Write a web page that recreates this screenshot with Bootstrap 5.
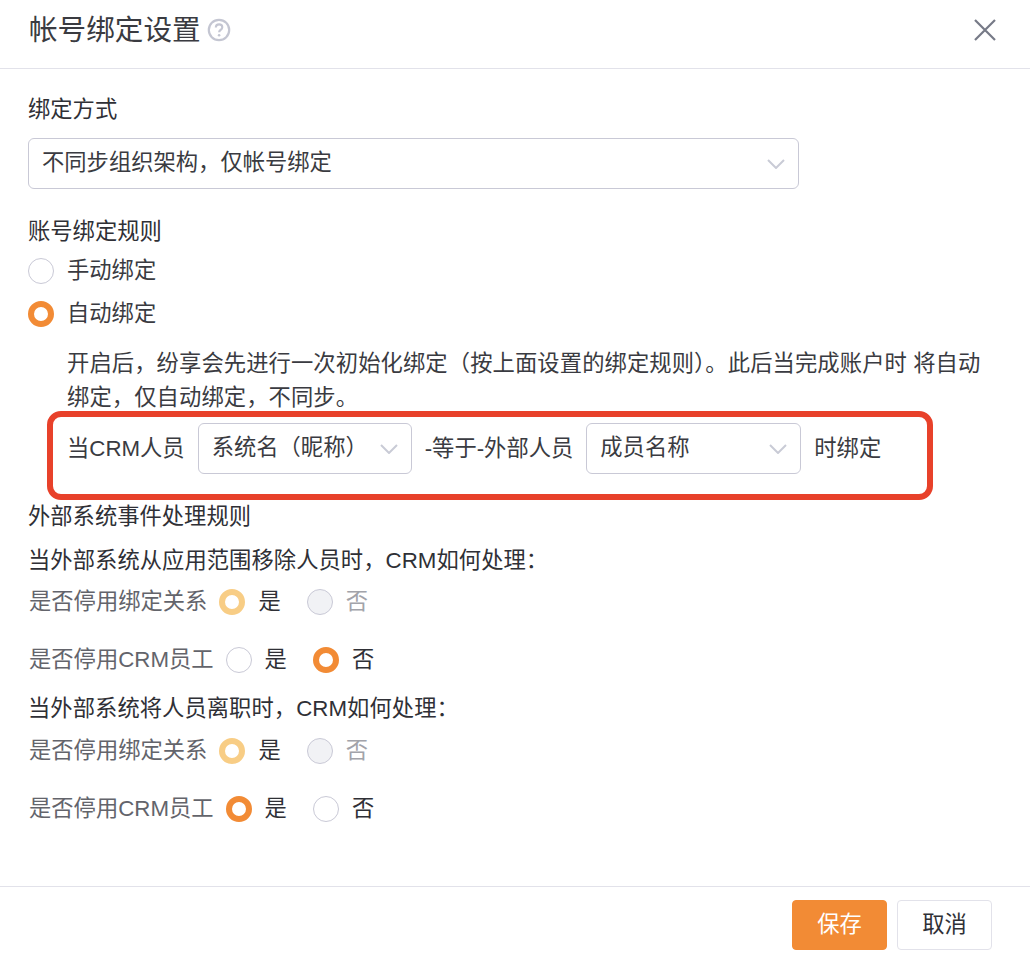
<!DOCTYPE html>
<html lang="zh-CN">
<head>
<meta charset="utf-8">
<title>帐号绑定设置</title>
<link href="https://cdn.jsdelivr.net/npm/bootstrap@5.3.0/dist/css/bootstrap.min.css" rel="stylesheet">
<style>
html,body{height:960px;overflow:hidden;background:#fff}
body{font-family:"Liberation Sans","Noto Sans CJK SC",sans-serif;font-size:22.3px;color:#2f3036;line-height:34px}
.shell{position:relative;height:960px;display:flex;flex-direction:column}
.head-bar{height:69px;padding:0 28px 8px 29px;border-bottom:1px solid #e2e2ea;flex:none}
.head-title{font-size:28.6px;line-height:60px;color:#3a3b41;margin:0;font-weight:400}
.help-ico{width:24px;height:24px;margin-left:6px;flex:none}
.close-ico{width:22px;height:22px;margin-right:6px}
.main-area{flex:1;padding:24px 28px 0 28px}
.sec-label{line-height:34px}
.sec-rule{margin-top:26px}
.pick{height:51px;border:1px solid #c9c9d6;border-radius:6px;font-size:22.3px;line-height:1.2;color:#3a3b41;padding:0 40px 0 13px;background-color:#fff;background-position:right 13px center;background-size:18px 10px;background-image:url("data:image/svg+xml,%3csvg xmlns='http://www.w3.org/2000/svg' viewBox='0 0 18 10'%3e%3cpath fill='none' stroke='%23c9cbd6' stroke-width='2' d='M1 1l8 8 8-8'/%3e%3c/svg%3e")}
.pick-wide{width:771px;margin-top:11px}
.pick-a{width:214px}
.pick-b{width:215px}
.rad{width:26px;height:26px;margin:0;flex:none;border:1px solid #c9c9d6;background-image:none!important;background-color:#fff}
.rad:checked{background-color:#fff;border:6.5px solid #f28b35}
.rad:disabled{opacity:1}
.rad:disabled:not(:checked){background-color:#f1f2f5}
.rad:checked:disabled{border-color:#f8cd85}
.opt-row{height:43px;gap:13px}
.opt-row label{color:#3a3b41}
.desc-txt{margin:12px 20px 0 39px;line-height:34px;color:#3a3b41;letter-spacing:.1px}
.rule-row{margin:8px 0 0 39px;height:51px;gap:13px;white-space:nowrap;color:#3a3b41}
.ev-head{margin-top:26px}
.ev-q{margin-top:10px;letter-spacing:.05px}
.ev-q.later{margin-top:11px}
.ev-row{height:42px;margin-top:3px;gap:13px;white-space:nowrap}
.ev-row.second{margin-top:4px}
.ev-row.tall{margin-top:16px}
.ev-tag{color:#63646b;margin-left:1px;margin-right:-1px}
.ev-gap{margin-left:13px}
.ev-off{color:#a2a3aa}
.red-mark{position:absolute;left:47px;top:411px;width:886px;height:89px;border:6px solid #e8412a;border-radius:14px;pointer-events:none}
.foot-bar{height:74px;border-top:1px solid #e2e2ea;padding:13px 38px 10px 0;flex:none;gap:10px}
.act{width:95px;height:50px;font-size:22.3px;line-height:1;padding:0;border-radius:4px}
.act-main{background:#f28b35;border:1px solid #f28b35;color:#fff}
.act-plain{background:#fff;border:1px solid #e2e2ea;color:#2f3036}
</style>
</head>
<body>
<div class="shell">
  <div class="head-bar d-flex align-items-center justify-content-between">
    <div class="d-flex align-items-center">
      <h1 class="head-title">帐号绑定设置</h1>
      <svg class="help-ico" viewBox="0 0 24 24"><circle cx="12" cy="12" r="10.2" fill="none" stroke="#c4c6d2" stroke-width="2.2"/><path d="M8.8 9.6c0-2 1.4-3.2 3.3-3.2s3.2 1.2 3.2 2.9c0 1.3-.7 2-1.8 2.7-.9.6-1.4 1.1-1.4 2.2" fill="none" stroke="#c4c6d2" stroke-width="2.1"/><circle cx="12.1" cy="17.3" r="1.3" fill="#c4c6d2"/></svg>
    </div>
    <svg class="close-ico" viewBox="0 0 22 22"><path d="M1 1l20 20M21 1L1 21" stroke="#767a87" stroke-width="2.2" fill="none"/></svg>
  </div>
  <div class="main-area">
    <div class="sec-label">绑定方式</div>
    <select class="form-select pick pick-wide"><option>不同步组织架构，仅帐号绑定</option></select>
    <div class="sec-label sec-rule">账号绑定规则</div>
    <div class="opt-row d-flex align-items-center">
      <input class="form-check-input rad" type="radio" name="bind" id="m1"><label for="m1">手动绑定</label>
    </div>
    <div class="opt-row d-flex align-items-center">
      <input class="form-check-input rad" type="radio" name="bind" id="m2" checked><label for="m2">自动绑定</label>
    </div>
    <p class="desc-txt">开启后，纷享会先进行一次初始化绑定（按上面设置的绑定规则）。此后当完成账户时 将自动绑定，仅自动绑定，不同步。</p>
    <div class="rule-row d-flex align-items-center">
      <span>当CRM人员</span>
      <select class="form-select pick pick-a"><option>系统名（昵称）</option></select>
      <span>-等于-外部人员</span>
      <select class="form-select pick pick-b"><option>成员名称</option></select>
      <span>时绑定</span>
    </div>
    <div class="ev-head">外部系统事件处理规则</div>
    <div class="ev-q">当外部系统从应用范围移除人员时，CRM如何处理：</div>
    <div class="ev-row d-flex align-items-center">
      <span class="ev-tag">是否停用绑定关系</span>
      <input class="form-check-input rad" type="radio" name="a1" checked disabled><span>是</span>
      <input class="form-check-input rad ev-gap" type="radio" name="a1" disabled><span class="ev-off">否</span>
    </div>
    <div class="ev-row tall d-flex align-items-center">
      <span class="ev-tag">是否停用CRM员工</span>
      <input class="form-check-input rad" type="radio" name="a2"><span>是</span>
      <input class="form-check-input rad ev-gap" type="radio" name="a2" checked><span>否</span>
    </div>
    <div class="ev-q later">当外部系统将人员离职时，CRM如何处理：</div>
    <div class="ev-row second d-flex align-items-center">
      <span class="ev-tag">是否停用绑定关系</span>
      <input class="form-check-input rad" type="radio" name="b1" checked disabled><span>是</span>
      <input class="form-check-input rad ev-gap" type="radio" name="b1" disabled><span class="ev-off">否</span>
    </div>
    <div class="ev-row tall d-flex align-items-center">
      <span class="ev-tag">是否停用CRM员工</span>
      <input class="form-check-input rad" type="radio" name="b2" checked><span>是</span>
      <input class="form-check-input rad ev-gap" type="radio" name="b2"><span>否</span>
    </div>
  </div>
  <div class="foot-bar d-flex justify-content-end align-items-start">
    <button class="btn act act-main" type="button">保存</button>
    <button class="btn act act-plain" type="button">取消</button>
  </div>
  <div class="red-mark"></div>
</div>
<script src="https://cdn.jsdelivr.net/npm/bootstrap@5.3.0/dist/js/bootstrap.bundle.min.js"></script>
</body>
</html>
